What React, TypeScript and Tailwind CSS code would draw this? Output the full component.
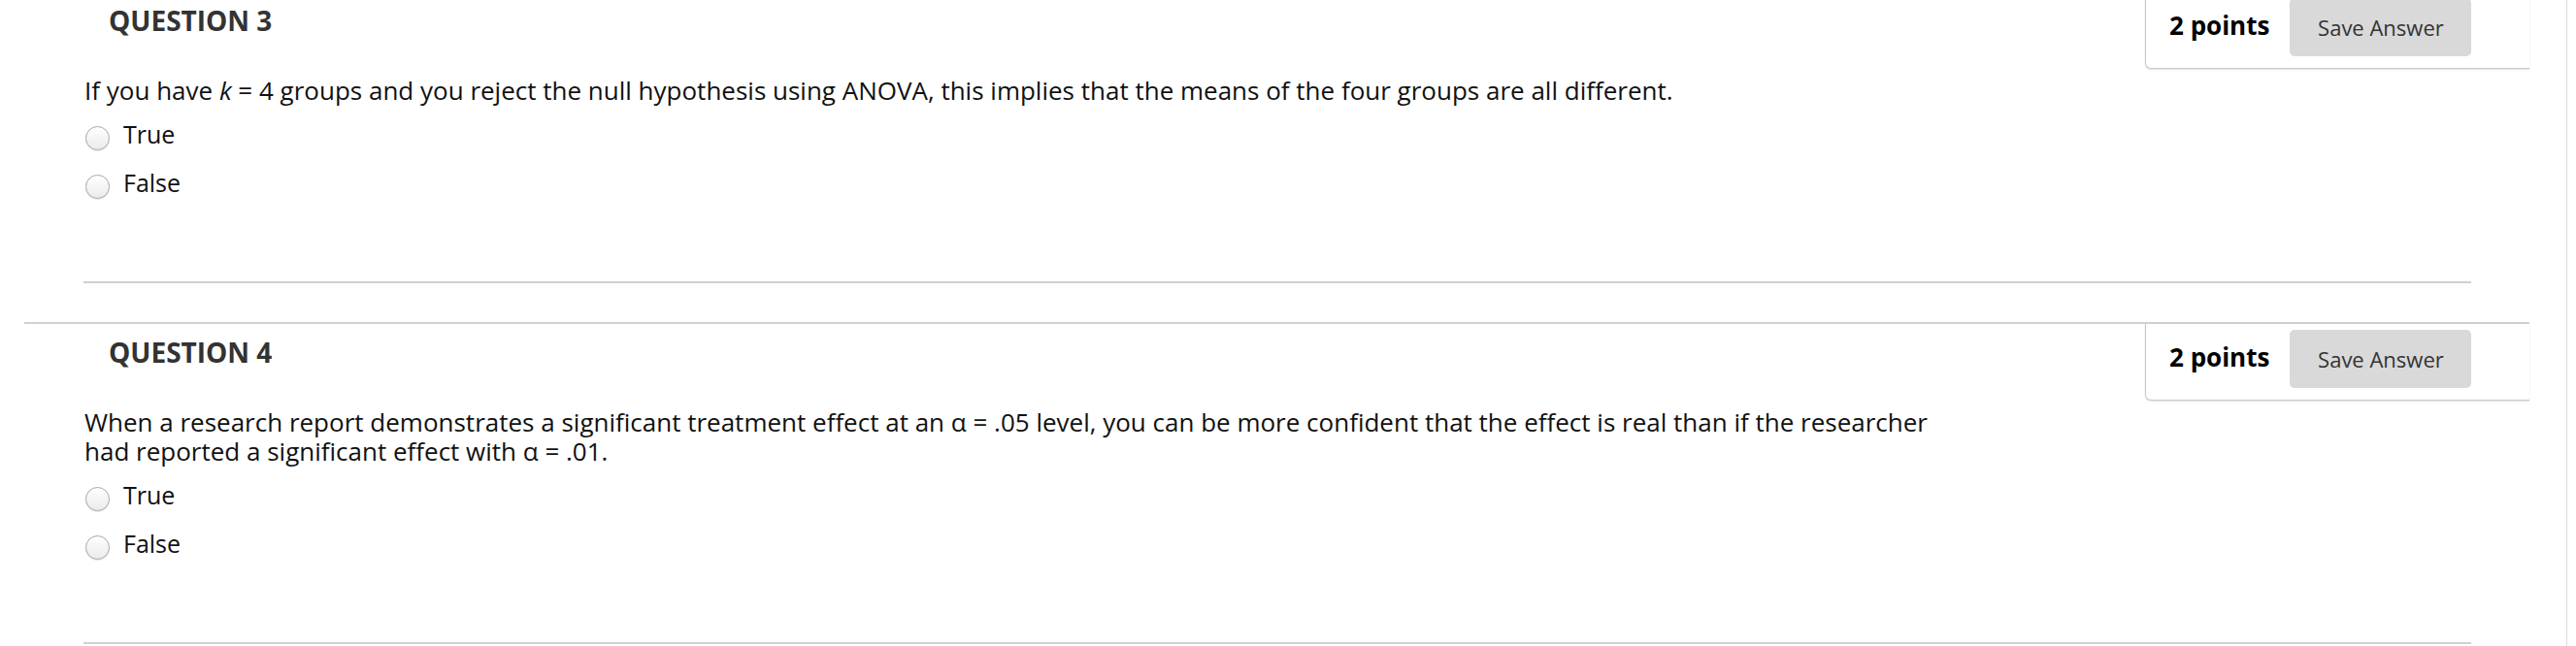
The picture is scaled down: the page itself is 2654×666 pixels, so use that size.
import React from "react";

type Question = {
  number: number;
  points: number;
  text: React.ReactNode;
  options: string[];
};

const questions: Question[] = [
  {
    number: 3,
    points: 2,
    text: (
      <>
        If you have <em>k</em> = 4 groups and you reject the null hypothesis using ANOVA, this implies that the
        means of the four groups are all different.
      </>
    ),
    options: ["True", "False"],
  },
  {
    number: 4,
    points: 2,
    text: (
      <>
        When a research report demonstrates a significant treatment effect at an α = .05 level, you can be more
        confident that the effect is real than if the researcher had reported a significant effect with α = .01.
      </>
    ),
    options: ["True", "False"],
  },
];

const Radio = () => (
  <span className="mt-[7px] ml-[2px] w-[25px] h-[25px] shrink-0 rounded-full border border-[#a8a8a8] bg-linear-to-b from-white to-[#ebebeb] shadow-[0_1px_1px_rgba(0,0,0,0.1)]" />
);

const QuestionBlock = ({ q }: { q: Question }) => {
  return (
    <section className="ml-[25px] w-[2581px] border-t-2 border-[#d0d0d0]">
      {/* header: title + points box */}
      <div className="flex items-start justify-between">
        <h3 className="pl-[87px] pt-[11px] text-[28px] leading-[36px] font-bold text-[#333]">
          QUESTION {q.number}
        </h3>
        <div className="w-[396px] h-[79px] flex items-start pl-[24px] pt-[6px] border-l border-b border-[#c8c8c8] rounded-bl-[6px] shadow-[0_1px_2px_rgba(0,0,0,0.12)]">
          <span className="mt-[10px] text-[26px] leading-[36px] font-bold text-black">{q.points} points</span>
          <button className="ml-[21px] w-[187px] h-[60px] rounded-[5px] bg-[#d9d9d9] text-[22px] text-[#333]">
            Save Answer
          </button>
        </div>
      </div>

      {/* question body */}
      <div className="pl-[61px] pr-[60px]">
        <p className="mt-[7px] pl-[1px] max-w-[1920px] text-[26px] leading-[30px] text-[#111]">{q.text}</p>
        <div className="mt-[15px] flex flex-col gap-[20px]">
          {q.options.map((opt) => (
            <label key={opt} className="flex items-start h-[30px] text-[25px] leading-[30px] text-[#111]">
              <Radio />
              <span className="ml-[14px]">{opt}</span>
            </label>
          ))}
        </div>
        <div className="mt-[87px] mb-[40px] h-[2px] bg-[#d0d0d0]" />
      </div>
    </section>
  );
};

export default function App() {
  return (
    <div className="w-[2654px] h-[666px] overflow-hidden bg-white flex font-['Open_Sans',sans-serif]">
      <div className="w-[2644px] -mt-[10px]">
        {questions.map((q) => (
          <QuestionBlock key={q.number} q={q} />
        ))}
      </div>
      <div className="flex-1 border-l border-[#dcdcdc]" />
    </div>
  );
}
